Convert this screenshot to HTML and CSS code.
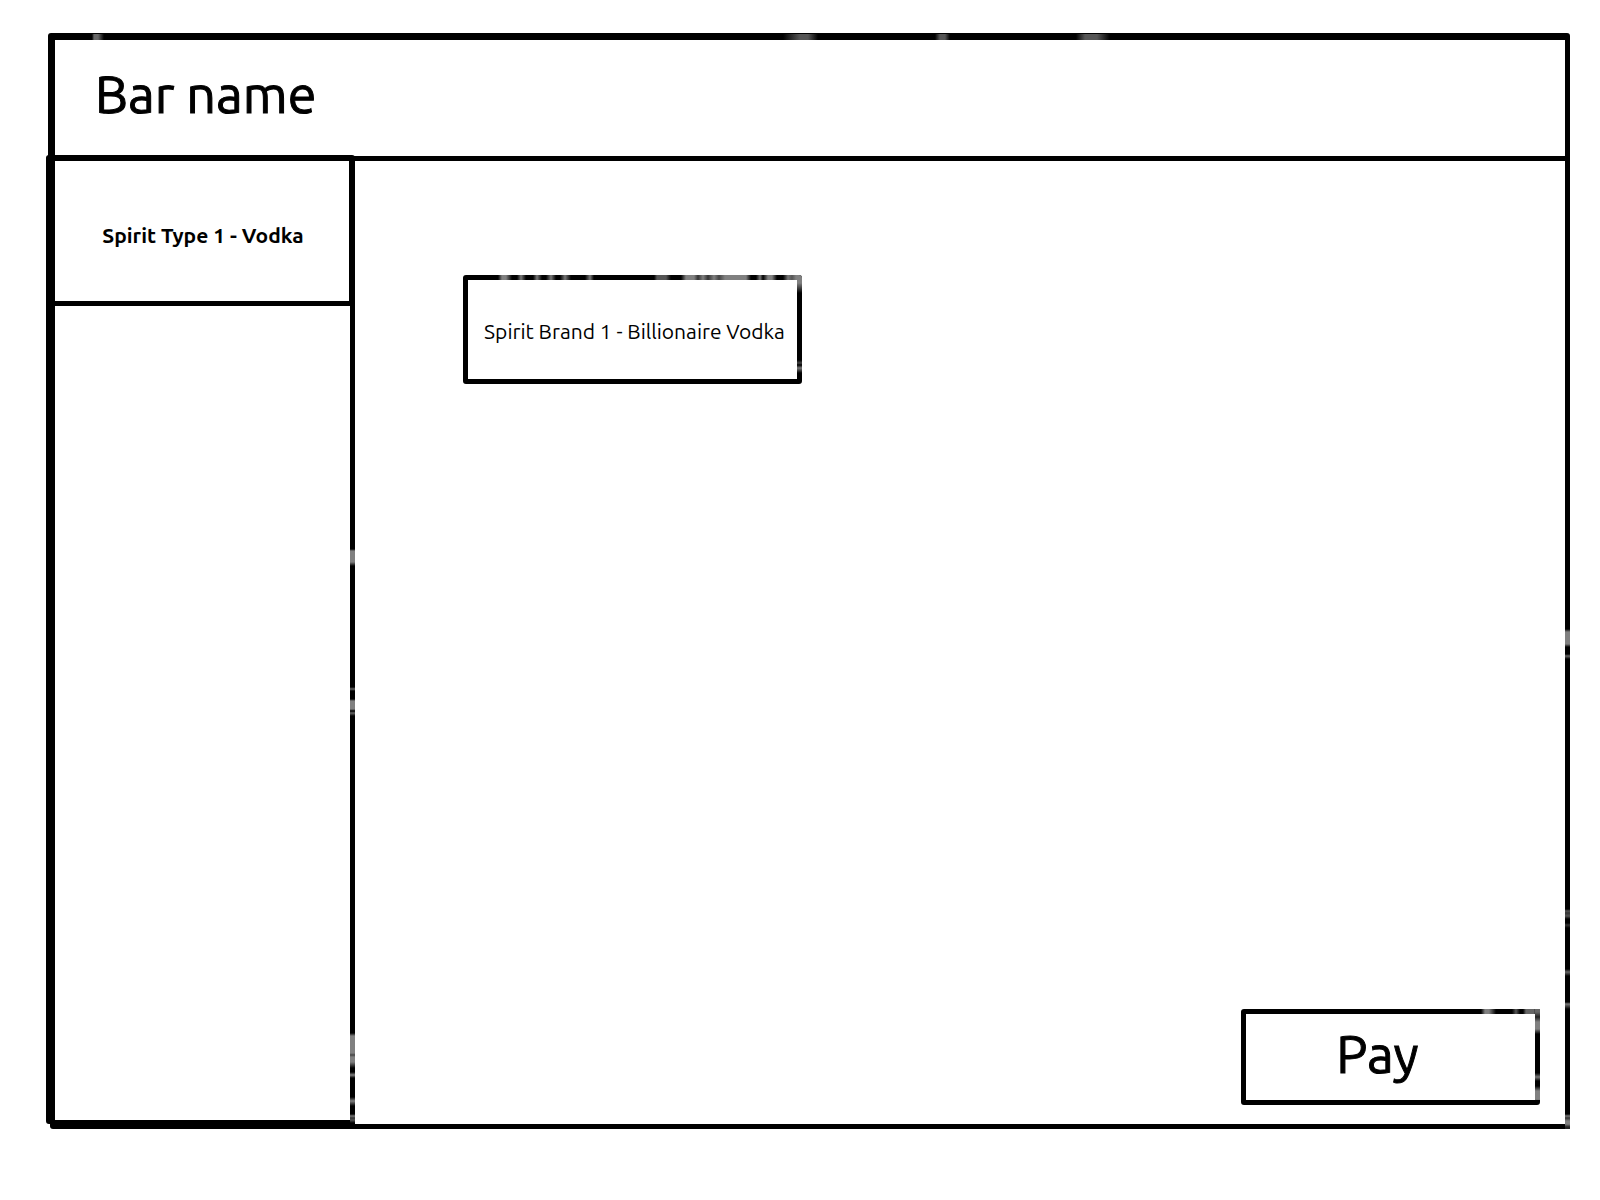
FILE: index.html
```html
<!DOCTYPE html>
<html lang="en">
<head>
<meta charset="utf-8">
<title>Bar name</title>
<link rel="stylesheet" href="styles.css">
</head>
<body>
<header class="header">
  <h1 class="title">Bar name</h1>
</header>
<div class="workspace">
  <nav class="sidebar">
    <button class="type" type="button">Spirit Type 1 - Vodka</button>
  </nav>
  <main class="main">
    <button class="brand" type="button">Spirit Brand 1 - Billionaire Vodka</button>
    <button class="pay" type="button">Pay</button>
  </main>
</div>
</body>
</html>
```
FILE: styles.css
```css
* { box-sizing: border-box; }

body {
  --ink: #000;
  --worn: #808080;
  margin: 0;
  min-height: 100vh;
  padding: 33px 30px 71px 46px;
  display: flex;
  flex-direction: column;
  background: #fff;
  color: var(--ink);
  font-family: Ubuntu, "Noto Sans", sans-serif;
}

button {
  background: transparent;
  color: inherit;
  font: inherit;
  white-space: nowrap;
  cursor: pointer;
}

/* Worn patches drawn over the ink lines */
.header, .sidebar, .main, .brand, .pay { position: relative; }

.header::before, .sidebar::after, .main::after,
.brand::before, .brand::after, .pay::before, .pay::after {
  content: "";
  position: absolute;
  pointer-events: none;
}

.header {
  margin-left: 2px;
  height: 128px;
  padding: 0 0 8px 40px;
  display: flex;
  align-items: center;
  border: solid var(--ink);
  border-width: 7px 5px 5px 7px;
  border-radius: 3px 3px 0 0;
}

.header::before {
  inset: -6px 0 auto -7px;
  height: 6px;
  background: linear-gradient(90deg,
    transparent 44px, #666 46px 50px, transparent 56px 735px,
    #555 752px 760px, transparent 770px 887px, #555 892px 897px, transparent 902px 1028px,
    #555 1037px 1049px, transparent 1062px);
}

.title, .pay {
  font-size: 52px;
  line-height: 60px;
  -webkit-text-stroke: 1px var(--ink);
}

.title {
  margin: 0;
  font-weight: 400;
}

.workspace {
  flex: 1;
  margin-left: 4px;
  display: grid;
  grid-template-columns: 305px 1fr;
  border-bottom: 5px solid var(--ink);
  border-radius: 0 0 3px 3px;
}

.sidebar {
  margin: -6px 0 0 -4px;
  border: solid var(--ink);
  border-width: 6px 5px 4px 9px;
  border-radius: 3px;
}

.sidebar::after {
  inset: 0 -5px -4px auto;
  width: 5px;
  background: linear-gradient(
    transparent 388px, var(--worn) 390px 401px, transparent 405px 526px,
    #666 528px, transparent 530px 538px, var(--worn) 540px 548px, transparent 550px,
    #666 552px, transparent 555px 872px, var(--worn) 875px 892px, #444 894px,
    var(--worn) 896px 901px, transparent 907px 911px, var(--worn) 914px, transparent 917px 936px,
    var(--worn) 940px, transparent 945px 953px, #777 955px, #333 957px, #555 959px, #000 962px);
}

.type {
  display: block;
  width: 300px;
  height: 145px;
  padding: 8px 0 0 2px;
  border: solid var(--ink);
  border-width: 0 6px 5px 0;
  border-radius: 0 3px 2px 0;
  font-size: 21px;
  font-weight: 700;
}

.main {
  display: flex;
  flex-direction: column;
  align-items: flex-start;
  justify-content: space-between;
  padding: 114px 25px 19px 108px;
  border-right: 5px solid var(--ink);
}

.main::after {
  inset: 0 -5px -5px auto;
  width: 5px;
  background: linear-gradient(
    transparent 468px, var(--worn) 471px 483px, transparent 486px 493px,
    #666 495px, transparent 498px 748px, #555 750px, #333 752px, #555 755px,
    transparent 758px 762px, #333 764px, transparent 767px 808px, #666 811px, transparent 815px 841px,
    #777 843px, transparent 848px 953px, #777 955px, #333 957px, var(--worn) 960px 963px, #222 966px);
}

.brand, .pay {
  border: 5px solid var(--ink);
  border-radius: 3px;
}

.brand {
  width: 339px;
  height: 109px;
  padding: 2px 0 0 4px;
  font-size: 21px;
}

.brand::before {
  inset: -5px 0 auto 0;
  height: 5px;
  background: linear-gradient(90deg,
    transparent 30px, var(--worn) 34px 38px, transparent 44px 49px, #777 53px, transparent 58px 65px,
    #777 69px, transparent 74px 78px, #777 83px, transparent 88px 92px, #777 97px, transparent 103px 117px,
    #777 122px, transparent 126px 186px, #555 189px 198px, transparent 203px 213px,
    var(--worn) 218px 226px, #333 230px, var(--worn) 235px, #333 240px, var(--worn) 246px, #444 251px,
    var(--worn) 257px 278px, transparent 283px 288px, #777 292px, transparent 295px, var(--worn) 300px 304px,
    transparent 309px 315px, #777 320px, #555 324px, var(--worn) 328px);
}

.brand::after {
  inset: -5px -5px 0 auto;
  width: 5px;
  background: linear-gradient(var(--worn) 8px, transparent 18px 85px, #444 88px, transparent 90px,
    #777 93px, transparent 98px);
  border-radius: 0 3px 0 0;
}

.pay {
  align-self: flex-end;
  width: 299px;
  height: 96px;
  padding: 0 26px 6px 0;
}

.pay::before {
  inset: -5px 0 auto 0;
  height: 5px;
  background: linear-gradient(90deg, transparent 235px, var(--worn) 239px 243px, transparent 250px 266px,
    #555 270px, transparent 274px 277px, #666 280px 288px, #333);
}

.pay::after {
  inset: -5px -5px 0 auto;
  width: 5px;
  background: linear-gradient(#666 3px, #222 8px, var(--worn) 13px 20px, transparent 25px 64px,
    #777 68px, transparent 72px 77px, var(--worn) 82px 90px, #222 96px);
}
```
